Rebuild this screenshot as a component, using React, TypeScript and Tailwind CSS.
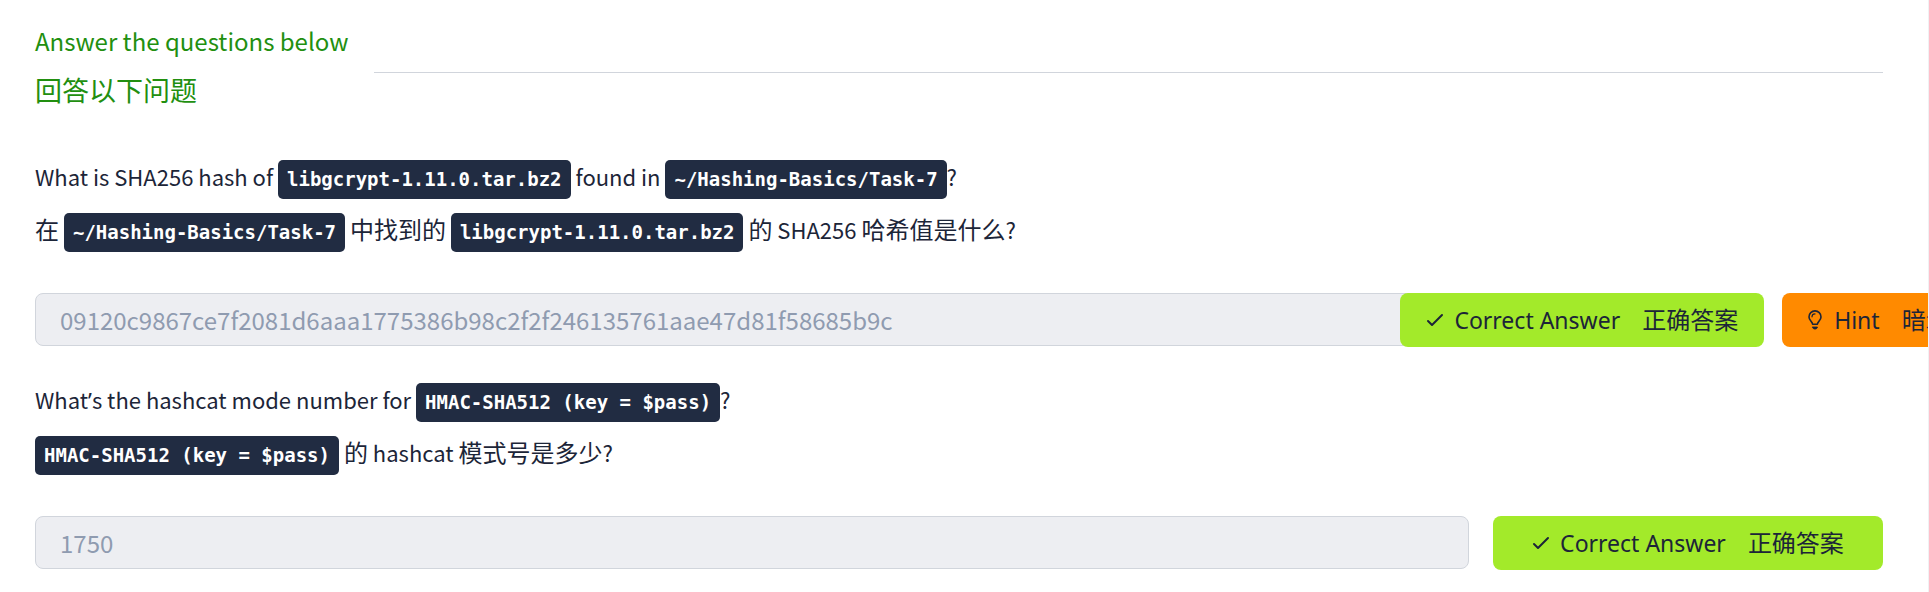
import type { ReactNode } from "react";

interface QuestionProps {
  id: string;
  answer: string;
  hint?: boolean;
  children: ReactNode;
}

// Inline SVG icons
const CheckIcon = () => (
  <svg width="18" height="14" viewBox="0 0 18 14" fill="none" stroke="currentColor" strokeWidth="2" strokeLinecap="round" strokeLinejoin="round" aria-hidden="true">
    <polyline points="2 8 6 12 16 2" />
  </svg>
);

const BulbIcon = () => (
  <svg width="14" height="20" viewBox="0 0 14 20" fill="none" stroke="currentColor" strokeWidth="1.6" strokeLinecap="round" strokeLinejoin="round" aria-hidden="true">
    <path d="M4.6 14.2C4.4 11.6 1 10.6 1 6.9a6 6 0 0 1 12 0c0 3.7-3.4 4.7-3.6 7.3z" />
    <path d="M4 6.8a3 3 0 0 1 3-2.9" strokeWidth="1.2" />
    <path d="M4.6 17h4.8v.6L8.2 19H5.8l-1.2-1.4z" fill="currentColor" strokeWidth="0.8" />
  </svg>
);

const Code = ({ children }: { children: ReactNode }) => (
  <code className="inline-block h-[39px] rounded-[5px] bg-[#212c42] px-[9px] align-baseline font-['DejaVu_Sans_Mono',monospace] text-[19px] leading-[39px] font-bold text-white">
    {children}
  </code>
);

const Zh = ({ children }: { children: ReactNode }) => (
  <span lang="zh-CN" className="text-2xl leading-none">{children}</span>
);

const buttonClass =
  "flex h-[54px] shrink-0 items-center justify-center rounded-lg px-[26px] font-['Noto_Sans','Noto_Sans_CJK_SC',sans-serif] text-[23px] whitespace-nowrap text-[#1c2538]";

function Question({ id, answer, hint, children }: QuestionProps) {
  return (
    <section className="mb-[26px]">
      <label htmlFor={id} className="block text-[22px] leading-[53px]">
        {children}
      </label>
      <div className="mt-[37px] flex items-start gap-6">
        <input
          id={id}
          type="text"
          value={answer}
          disabled
          className="h-[53px] min-w-0 flex-1 rounded-lg border border-[#d1d5dc] bg-[#edeef2] px-6 text-2xl text-[#8f9bb0]"
        />
        {/* Wider content spills evenly to both sides of this column */}
        <div className="flex w-[390px] shrink-0 justify-center gap-[18px]">
          <button type="button" className={`${buttonClass} bg-[#a3ea2a] ${hint ? "" : "flex-1"}`}>
            <CheckIcon />
            <span className="ml-2.5">Correct Answer</span>
            <span lang="zh-CN" className="ml-[22px] text-2xl">正确答案</span>
          </button>
          {hint && (
            <button type="button" className={`${buttonClass} bg-[#ff8a00]`}>
              <BulbIcon />
              <span className="ml-3">Hint</span>
              <span lang="zh-CN" className="ml-[22px] text-2xl">暗示</span>
            </button>
          )}
        </div>
      </div>
    </section>
  );
}

export default function App() {
  return (
    <main className="min-h-screen overflow-x-hidden border-r border-[#f0f1f3] bg-white pt-4 pr-[45px] pl-[35px] font-['Noto_Sans_CJK_SC',sans-serif] text-[#1c2538]">
      {/* Header */}
      <header className="mb-[21px] flex items-center gap-[26px]">
        <h2 className="pb-3.5 text-2xl leading-[49px] text-[#228f10]">
          Answer the questions below
          <br />
          <span lang="zh-CN" className="text-[27px]">回答以下问题</span>
        </h2>
        <hr className="flex-1 border-[#d1d5dc]" />
      </header>

      {/* Questions */}
      <Question id="answer-hash" answer="09120c9867ce7f2081d6aaa1775386b98c2f2f246135761aae47d81f58685b9c" hint>
        What is SHA256 hash of <Code>libgcrypt-1.11.0.tar.bz2</Code> found in <Code>~/Hashing-Basics/Task-7</Code>?
        <br />
        <Zh>在</Zh> <Code>~/Hashing-Basics/Task-7</Code> <Zh>中找到的</Zh> <Code>libgcrypt-1.11.0.tar.bz2</Code> <Zh>的</Zh> SHA256 <Zh>哈希值是什么</Zh>?
      </Question>
      <Question id="answer-mode" answer="1750">
        {/* The CJK face draws ’ full width */}
        What<span className="font-['Noto_Sans',sans-serif] leading-none">’</span>s the hashcat mode number for <Code>HMAC-SHA512 (key = $pass)</Code>?
        <br />
        <Code>HMAC-SHA512 (key = $pass)</Code> <Zh>的</Zh> hashcat <Zh>模式号是多少</Zh>?
      </Question>
    </main>
  );
}
